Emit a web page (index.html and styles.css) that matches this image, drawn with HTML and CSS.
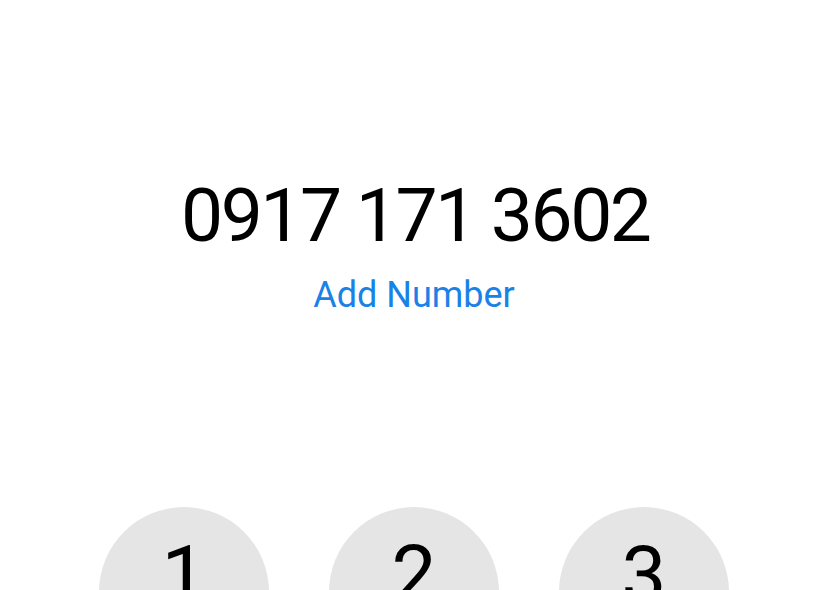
FILE: index.html
```html
<!DOCTYPE html>
<html>
<head>
<meta charset="utf-8">
<link rel="stylesheet" href="styles.css">
</head>
<body>
<div class="screen">
  <div class="number">0917 171 3602</div>
  <a class="add">Add Number</a>
  <div class="keypad">
    <div class="key"><span class="digit">1</span></div>
    <div class="key"><span class="digit">2</span></div>
    <div class="key"><span class="digit">3</span></div>
  </div>
</div>
</body>
</html>
```
FILE: styles.css
```css
html, body {
  margin: 0;
  padding: 0;
  background: #ffffff;
}
.screen {
  width: 828px;
  height: 590px;
  overflow: hidden;
  display: flex;
  flex-direction: column;
  align-items: center;
  font-family: Roboto, "Liberation Sans", Arial, sans-serif;
}
.number {
  padding-top: 178px;
  padding-left: 2.5px;
  font-size: 75px;
  line-height: 75px;
  letter-spacing: -2.5px;
  color: #000000;
  white-space: nowrap;
}
.add {
  margin-top: 24px;
  font-size: 36px;
  line-height: 36px;
  color: #1a82e6;
}
.keypad {
  margin-top: 194px;
  display: flex;
  gap: 60px;
}
.key {
  width: 170px;
  height: 170px;
  flex: none;
  border-radius: 50%;
  background: #e5e5e5;
  display: flex;
  justify-content: center;
  padding-top: 28px;
  box-sizing: border-box;
}
.digit {
  font-size: 80px;
  line-height: 80px;
  color: #000000;
}
```
